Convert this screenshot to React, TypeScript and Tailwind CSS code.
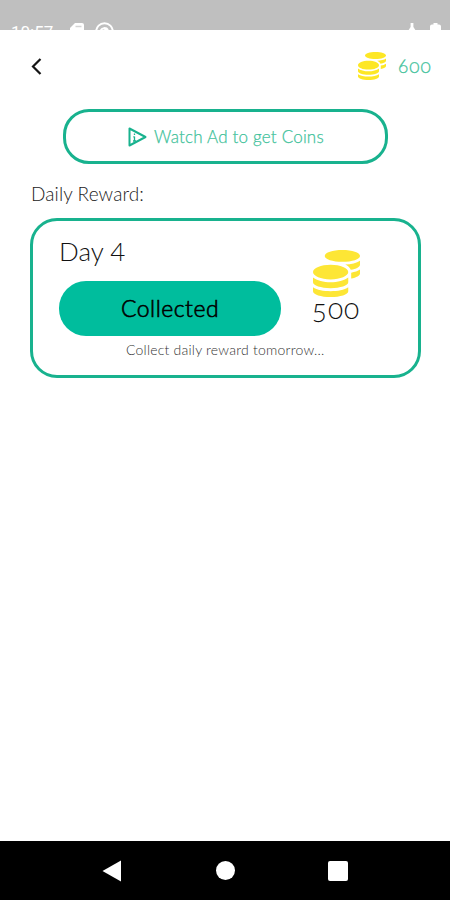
import { FaCoins } from "react-icons/fa";

interface CoinAmountProps {
  value: number;
  className: string;
}

const CoinAmount = ({ value, className }: CoinAmountProps) => (
  <span className={`oldstyle-nums whitespace-nowrap ${className}`}>{value}</span>
);

// System bar, its lower half is cut by the app screen
function StatusBar() {
  return (
    <div className="h-[30px] shrink-0 overflow-hidden bg-[#bfbfbf] text-white flex items-start justify-between pl-[11px]">
      <div className="flex items-start">
        <span className="font-['Roboto'] font-normal text-[17px] leading-[20px] mt-[22px] w-[59px]">10:57</span>
        <svg className="mt-[23px] w-[14px] h-[16px]" viewBox="0 0 14 16" fill="currentColor">
          <path d="M5 0h7a2 2 0 0 1 2 2v12a2 2 0 0 1-2 2H2a2 2 0 0 1-2-2V5z" />
          <path d="M5.500 3.500h6" stroke="#d4d4d4" strokeWidth="1.500" />
        </svg>
        <svg className="ml-[11px] mt-[22px] w-[19px] h-[19px]" viewBox="0 0 19 19" fill="none" stroke="currentColor" strokeWidth="2">
          <circle cx="9.5" cy="9.5" r="8.3" />
          <path d="M5.500 9a4.200 4.200 0 0 1 7.500-1M9 6l4 4" />
        </svg>
      </div>
      <div className="flex items-start mt-[23px] pr-[9px]">
        <svg className="w-[8px] h-[12px] mr-[14px]" viewBox="0 0 8 12" fill="currentColor">
          <path d="M2.6 0h2.8v4L8 8v4H0V8l2.6-4z" />
        </svg>
        <svg className="w-[11px] h-[16px]" viewBox="0 0 11 16" fill="currentColor">
          <path d="M3.5 0h4v1.5H9a2 2 0 0 1 2 2V16H0V3.500a2 2 0 0 1 2-2h1.500z" />
        </svg>
      </div>
    </div>
  );
}

function NavigationBar() {
  return (
    <nav className="h-[59px] shrink-0 bg-black flex items-center justify-between pl-[102px] pr-[102px]">
      <svg className="w-[20px] h-[22px]" viewBox="0 0 20 22" fill="white">
        <path d="M19 .5v21L.5 11z" />
      </svg>
      <div className="size-[19px] rounded-full bg-white" />
      <div className="size-[20px] rounded-[2px] bg-white" />
    </nav>
  );
}

function App() {
  return (
    <div className="w-[450px] h-[900px] flex flex-col overflow-hidden bg-white font-['Lato',sans-serif] font-light">
      <StatusBar />

      <header className="h-[79px] shrink-0 flex items-start justify-between pl-[31px] pr-[19px]">
        <button className="mt-[28px]">
          <svg className="w-[11px] h-[17px]" viewBox="0 0 11 17" fill="none" stroke="#151515" strokeWidth="2.2">
            <path d="M9.500 1 2 8.500 9.500 16" />
          </svg>
        </button>
        <div className="flex items-start text-[#3fc29b]">
          <FaCoins className="mt-[22px] size-[28px] text-[#fde725]" />
          <CoinAmount value={600} className="ml-[12px] mt-[24px] w-[33px] text-[19px] leading-[24px] tracking-[1px] font-light [-webkit-text-stroke:0.25px]" />
        </div>
      </header>

      <main className="flex-1 flex flex-col">
        <button className="ml-[63px] w-[325px] h-[55px] shrink-0 border-[3px] border-[#18b28e] rounded-[26px] flex items-center pl-[62px] text-[#3fc29b]">
          <svg className="w-[19px] h-[20px] mr-[7px]" viewBox="0 0 19 20" fill="none" stroke="#18b28e" strokeWidth="2" strokeLinejoin="round">
            <path d="M1.500 1.500v17L17.500 10z" />
            <path d="M6.500 9.500v5M6.500 6.500v1.500M5.300 9.800h1.200M5 14h3" strokeWidth="1.300" />
          </svg>
          <span className="text-[17px] leading-[22px] tracking-[0.2px] whitespace-nowrap [-webkit-text-stroke:0.25px]">Watch Ad to get Coins</span>
        </button>

        <h2 className="ml-[31px] mt-[18px] h-[24px] text-[19px] leading-[24px] tracking-[0.1px] text-[#222]">Daily Reward:</h2>

        <section className="ml-[30px] mt-[12px] w-[391px] h-[160px] border-[3px] border-[#18b28e] rounded-[27px] flex">
          <div className="ml-[26px] w-[222px] flex flex-col">
            <h3 className="mt-[14px] h-[33px] text-[26px] leading-[32px] text-[#111]">Day 4</h3>
            <button className="mt-[13px] h-[55px] w-[222px] shrink-0 rounded-[27px] bg-[#00bd9d] text-black text-[23px] tracking-[0.5px] font-light [-webkit-text-stroke:0.6px]">
              Collected
            </button>
            <p className="ml-[67px] mt-[5px] text-[14px] leading-[18px] tracking-[0.22px] whitespace-nowrap text-[#333]">
              Collect daily reward tomorrow...
            </p>
          </div>
          <div className="ml-[31px] w-[48px] flex flex-col items-center">
            <FaCoins className="mt-[29px] size-[47px] shrink-0 text-[#fde635]" />
            <CoinAmount value={500} className="mt-[-5px] text-[28px] leading-[32px] tracking-[1px] text-[#111]" />
          </div>
        </section>
      </main>

      <NavigationBar />
    </div>
  );
}

export default App;
